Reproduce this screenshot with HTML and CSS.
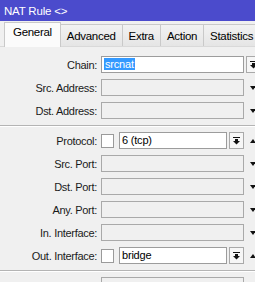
FILE: index.html
```html
<!DOCTYPE html>
<html lang="en">
<head>
  <meta charset="UTF-8">
  <title>NAT Rule</title>
  <link rel="stylesheet" href="styles.css">
</head>
<body>
  <div class="window">
    <div class="titlebar">NAT Rule &lt;&gt;</div>

    <div class="tabs">
      <div class="tab active">General</div>
      <div class="tab">Advanced</div>
      <div class="tab">Extra</div>
      <div class="tab">Action</div>
      <div class="tab">Statistics</div>
    </div>

    <div class="panel">
      <div class="row">
        <label class="label">Chain:</label>
        <div class="field">
          <div class="input white"><span class="selected">srcnat</span></div>
        </div>
        <div class="dropbtn outside">
          <svg width="7" height="8" viewBox="0 0 7 8"><rect x="0" y="0" width="7" height="1"/><rect x="2" y="2" width="3" height="2"/><polygon points="0,4 7,4 3.5,7.5"/></svg>
        </div>
      </div>
      <div class="row">
        <label class="label">Src. Address:</label>
        <div class="field"><div class="input"></div></div>
        <span class="side down"></span>
      </div>
      <div class="row">
        <label class="label">Dst. Address:</label>
        <div class="field"><div class="input"></div></div>
        <span class="side down"></span>
      </div>

      <div class="separator"></div>

      <div class="row">
        <label class="label">Protocol:</label>
        <div class="field">
          <span class="check"></span>
          <div class="input white">6 (tcp)</div>
          <div class="dropbtn">
            <svg width="7" height="8" viewBox="0 0 7 8"><rect x="0" y="0" width="7" height="1"/><rect x="2" y="2" width="3" height="2"/><polygon points="0,4 7,4 3.5,7.5"/></svg>
          </div>
        </div>
        <span class="side up"></span>
      </div>
      <div class="row">
        <label class="label">Src. Port:</label>
        <div class="field"><div class="input"></div></div>
        <span class="side down"></span>
      </div>
      <div class="row">
        <label class="label">Dst. Port:</label>
        <div class="field"><div class="input"></div></div>
        <span class="side down"></span>
      </div>
      <div class="row">
        <label class="label">Any. Port:</label>
        <div class="field"><div class="input"></div></div>
        <span class="side down"></span>
      </div>
      <div class="row">
        <label class="label">In. Interface:</label>
        <div class="field"><div class="input"></div></div>
        <span class="side down"></span>
      </div>
      <div class="row">
        <label class="label">Out. Interface:</label>
        <div class="field">
          <span class="check"></span>
          <div class="input white">bridge</div>
          <div class="dropbtn">
            <svg width="7" height="8" viewBox="0 0 7 8"><rect x="0" y="0" width="7" height="1"/><rect x="2" y="2" width="3" height="2"/><polygon points="0,4 7,4 3.5,7.5"/></svg>
          </div>
        </div>
        <span class="side up"></span>
      </div>

      <div class="separator"></div>

      <div class="row">
        <label class="label"></label>
        <div class="field"><div class="input"></div></div>
      </div>
    </div>
  </div>
</body>
</html>
```

FILE: styles.css
```css
/* General Styles */
body {
  margin: 0;
  font-family: 'Liberation Sans', Arial, sans-serif;
  font-size: 11px;
  color: #000;
  background: #f0f0f0;
}

.window {
  width: 255px;
  height: 282px;
  overflow: hidden;
  background: #f0f0f0;
}

/* Title bar */
.titlebar {
  height: 21px;
  line-height: 22px;
  padding-left: 4px;
  background: #4b4bcc;
  color: #fff;
  font-size: 11.5px;
  letter-spacing: -0.2px;
}

/* Tabs */
.tabs {
  display: flex;
  align-items: flex-end;
  height: 26px;
  padding-left: 4px;
  border-bottom: 1px solid #d9d9d9;
  box-sizing: border-box;
}

.tab {
  height: 22px;
  line-height: 22px;
  padding: 0 6px;
  background: linear-gradient(#f2f2f2, #e5e5e5);
  border: 1px solid #c9c9c9;
  border-bottom: none;
  border-left: none;
  box-sizing: border-box;
  font-size: 11.5px;
  letter-spacing: -0.3px;
  white-space: nowrap;
}

.tab.active {
  height: 25px;
  line-height: 19px;
  margin-bottom: -1px;
  padding: 0 8px;
  background: #fbfbfb;
  border-left: 1px solid #c9c9c9;
}

/* Panel with form rows */
.panel {
  padding-top: 9px;
}

.row {
  display: flex;
  align-items: center;
  height: 17px;
  margin-bottom: 6px;
}

.label {
  flex: none;
  width: 97px;
  margin-right: 4px;
  text-align: right;
  letter-spacing: -0.3px;
  white-space: nowrap;
  color: #1a1a1a;
}

.field {
  flex: none;
  display: flex;
  align-items: center;
  width: 143px;
  height: 17px;
}

.input {
  flex: 1;
  height: 17px;
  box-sizing: border-box;
  border: 1px solid #a9a9a9;
  background: #f0f0f0;
  line-height: 15px;
  padding-left: 2px;
  letter-spacing: -0.2px;
}

.input.white {
  background: #fff;
  border-color: #9c9c9c;
}

.selected {
  background: #3399ff;
  color: #fff;
  padding: 0 1px;
}

.check {
  flex: none;
  width: 13px;
  height: 14px;
  box-sizing: border-box;
  border: 1px solid #9a9a9a;
  background: #fff;
  margin-right: 5px;
}

.dropbtn {
  flex: none;
  width: 15px;
  height: 17px;
  margin-left: 2px;
  box-sizing: border-box;
  border: 1px solid #a9a9a9;
  background: #f6f6f6;
  display: flex;
  align-items: center;
  justify-content: center;
}

.dropbtn svg {
  fill: #111;
}

.side {
  flex: none;
  width: 0;
  height: 0;
  margin-left: 6px;
  border-left: 3.5px solid transparent;
  border-right: 3.5px solid transparent;
}

.side.down {
  border-top: 4px solid #111;
}

.side.up {
  border-bottom: 4px solid #111;
}

.separator {
  height: 1px;
  margin: 1px 0 5px;
  border-top: 1px solid #b4b4b4;
  background: #fff;
}
```
